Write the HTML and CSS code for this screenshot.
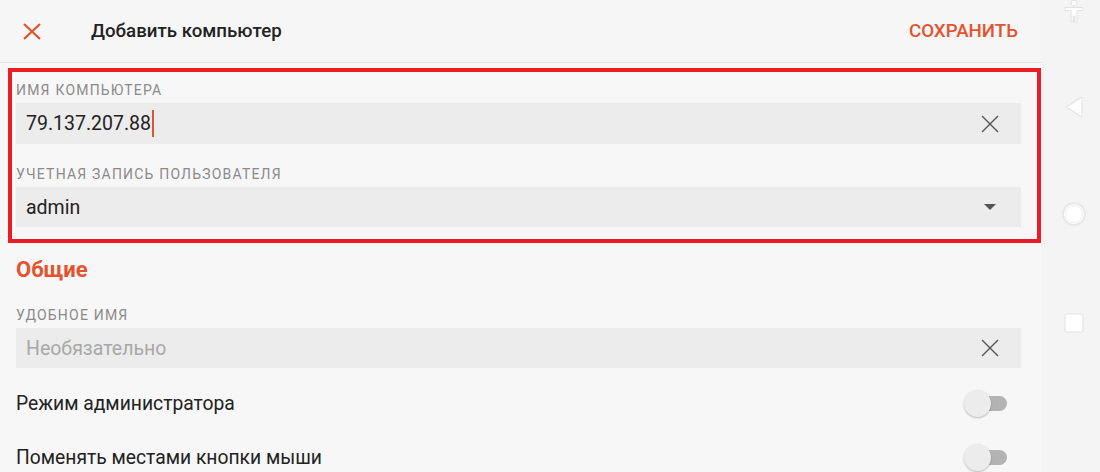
FILE: index.html
```html
<!DOCTYPE html>
<html lang="ru">
<head>
  <meta charset="UTF-8" />
  <meta name="viewport" content="width=device-width, initial-scale=1.0" />
  <title>Добавить компьютер</title>
  <link rel="stylesheet" href="styles.css">
</head>
<body>
  <div class="screen">

    <!-- Dialog -->
    <main class="dialog">
      <header class="toolbar">
        <button class="icon-btn close-btn" aria-label="Закрыть">
          <svg width="18" height="17" viewBox="0 0 18 17">
            <path d="M1 1 L17 16 M17 1 L1 16" stroke="#e4532f" stroke-width="2.2" fill="none" />
          </svg>
        </button>
        <h1 class="toolbar-title">Добавить компьютер</h1>
        <button class="save-btn">СОХРАНИТЬ</button>
      </header>

      <div class="content">
        <section class="highlight">
          <label class="field-label">Имя компьютера</label>
          <div class="field">
            <span class="field-value">79.137.207.88</span><span class="caret"></span>
            <svg class="field-icon" width="18" height="18" viewBox="0 0 18 18">
              <path d="M1 1 L17 17 M17 1 L1 17" stroke="#555" stroke-width="1.4" fill="none" />
            </svg>
          </div>

          <label class="field-label second">Учетная запись пользователя</label>
          <div class="field short">
            <span class="field-value">admin</span>
            <svg class="field-icon" width="18" height="18" viewBox="0 0 18 18">
              <path d="M3 6 L15 6 L9 12 Z" fill="#555" />
            </svg>
          </div>
        </section>

        <h2 class="group-title">Общие</h2>

        <label class="field-label">Удобное имя</label>
        <div class="field short">
          <span class="field-value placeholder">Необязательно</span>
          <svg class="field-icon" width="18" height="18" viewBox="0 0 18 18">
            <path d="M1 1 L17 17 M17 1 L1 17" stroke="#555" stroke-width="1.4" fill="none" />
          </svg>
        </div>

        <div class="switch-row first">
          <span>Режим администратора</span>
          <span class="switch"><span class="thumb"></span></span>
        </div>
        <div class="switch-row">
          <span>Поменять местами кнопки мыши</span>
          <span class="switch"><span class="thumb"></span></span>
        </div>
      </div>
    </main>

    <!-- System navigation bar -->
    <aside class="navbar">
      <svg class="nav-person" width="20" height="23" viewBox="0 0 20 23">
        <circle cx="10" cy="3" r="3" fill="#fff" stroke="#e2e2e2" />
        <path d="M1 7.5 H19 V10.5 H13 V22 H10.8 V16 H9.2 V22 H7 V10.5 H1 Z" fill="#fff" stroke="#e2e2e2" stroke-linejoin="round" />
      </svg>
      <svg class="nav-back" width="20" height="22" viewBox="0 0 20 22">
        <path d="M18 1 L2 11 L18 21 Z" fill="#fff" stroke="#e4e4e4" stroke-width="1.2" stroke-linejoin="round" />
      </svg>
      <svg class="nav-home" width="26" height="26" viewBox="0 0 26 26">
        <circle cx="13" cy="13" r="11" fill="#fff" stroke="#e8e8e8" stroke-width="2" />
        <circle cx="13" cy="13" r="8.5" fill="none" stroke="#efefef" stroke-width="1" />
      </svg>
      <svg class="nav-recent" width="20" height="20" viewBox="0 0 20 20">
        <rect x="1" y="1" width="18" height="18" rx="2" fill="#fff" stroke="#e4e4e4" stroke-width="1.2" />
      </svg>
    </aside>

  </div>
</body>
</html>
```

FILE: styles.css
```css
body {
  margin: 0;
  font-family: Roboto, "Noto Sans", Arial, sans-serif;
  background-color: #f7f7f7;
  overflow: hidden;
}

.screen {
  display: flex;
  height: 472px;
}

.dialog {
  width: 1042px;
  flex-shrink: 0;
}

/* Toolbar */
.toolbar {
  display: flex;
  align-items: center;
  height: 62px;
  padding: 0 24px 0 23px;
  border-bottom: 1px solid #e3e3e3;
  background-color: #f6f6f6;
}

.icon-btn {
  background: none;
  border: none;
  padding: 0;
  display: flex;
}

.toolbar-title {
  flex: 1;
  margin: 0 0 0 50px;
  font-size: 18.7px;
  font-weight: 500;
  color: #222;
}

.save-btn {
  background: none;
  border: none;
  padding: 0;
  font-family: inherit;
  font-size: 18.7px;
  font-weight: 500;
  color: #e4532f;
}

/* Content */
.content {
  padding: 0 21px 0 16px;
}

.highlight {
  margin: 5px -20px 0 -8px;
  padding: 10px 16px 12px 4px;
  border: 4px solid #ec1c24;
}

.field-label {
  display: block;
  font-size: 14px;
  line-height: 16px;
  letter-spacing: 1.2px;
  text-transform: uppercase;
  color: #8a8a8a;
  margin-bottom: 5px;
}

.field-label.second {
  margin-top: 22px;
}

.field {
  display: flex;
  align-items: center;
  height: 41px;
  padding: 0 22px 0 10px;
  background-color: #ececec;
}

.field.short {
  height: 40px;
}

.field-value {
  font-size: 19.5px;
  color: #222;
}

.field-value.placeholder {
  color: #a8a8a8;
}

.caret {
  width: 2px;
  height: 27px;
  margin-left: 1px;
  background-color: #e4532f;
}

.field-icon {
  margin-left: auto;
}

.group-title {
  margin: 15px 0 25px;
  font-size: 22px;
  line-height: 24px;
  font-weight: 700;
  color: #e4532f;
}

/* Switch rows */
.switch-row {
  display: flex;
  align-items: center;
  justify-content: space-between;
  height: 54px;
  padding-right: 14px;
  font-size: 19.3px;
  color: #222;
}

.switch-row.first {
  margin-top: 8px;
}

.switch {
  position: relative;
  width: 41px;
  height: 15px;
  border-radius: 8px;
  background-color: #b3b3b3;
}

.switch .thumb {
  position: absolute;
  left: -2px;
  top: -6px;
  width: 27px;
  height: 27px;
  border-radius: 50%;
  background-color: #ececec;
  box-shadow: 0 1px 2px rgba(0,0,0,0.25);
}

/* Nav bar */
.navbar {
  flex: 1;
  display: flex;
  flex-direction: column;
  align-items: center;
  padding-left: 6px;
  background-color: #f4f4f4;
}

.nav-person {
  margin-top: 0;
}

.nav-back {
  margin-top: 73px;
}

.nav-home {
  margin-top: 83px;
}

.nav-recent {
  margin-top: 86px;
}
```
